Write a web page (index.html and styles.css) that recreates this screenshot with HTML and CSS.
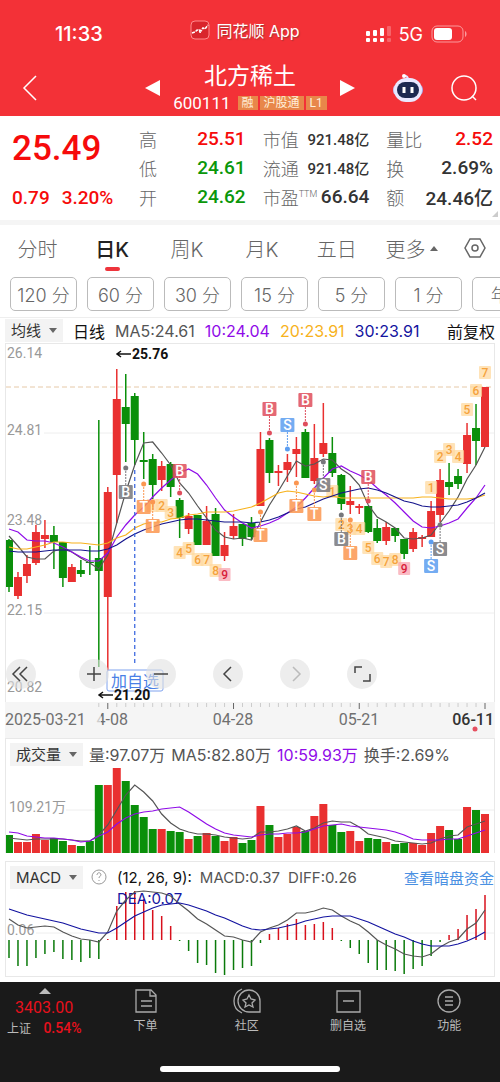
FILE: index.html
```
<!DOCTYPE html>
<html lang="zh-CN">
<head>
  <meta charset="UTF-8">
  <meta name="viewport" content="width=device-width, initial-scale=1.0">
  <title>北方稀土 600111</title>
  <link rel="stylesheet" href="styles.css">
</head>
<body>
  <header class="header">
    <div class="status-bar">
      <span class="clock">11:33</span>
      <span class="app-name">
        <svg width="20" height="20" viewBox="0 0 20 20" fill="none" stroke="#fff">
          <rect x="1" y="1" width="18" height="18" rx="4" fill="#d9252c" stroke="#ff8a8c"/>
          <path d="M2 13l3-1 2-2 3 1 3-3 2 1 3-4" stroke-width="1.5" stroke-dasharray="3 1"/>
          <path d="M9 9l1 4 2-3"/>
        </svg>
        同花顺 App
      </span>
      <span class="signals">
        <svg width="26" height="18" viewBox="0 0 26 18" fill="#fff">
          <rect x="1" y="6" width="4" height="5" rx="1"/>
          <rect x="8" y="5" width="4" height="6" rx="1"/>
          <rect x="15" y="3" width="4" height="8" rx="1"/>
          <rect x="22" y="1" width="4" height="10" rx="1" opacity=".25"/>
          <rect x="1" y="13" width="4" height="4" rx="1"/>
          <rect x="8" y="13" width="4" height="4" rx="1"/>
          <rect x="15" y="13" width="4" height="4" rx="1"/>
          <rect x="22" y="13" width="4" height="4" rx="1" opacity=".25"/>
        </svg>
        <span>5G</span>
        <svg width="36" height="18" viewBox="0 0 36 18">
          <rect x="1" y="1" width="31" height="16" rx="5" fill="none" stroke="#fa9a9d"/>
          <rect x="3" y="3" width="18" height="12" rx="3" fill="#fff"/>
          <path d="M34 6v6c2-1 2-5 0-6z" fill="#fa9a9d"/>
        </svg>
      </span>
    </div>
    <div class="title-bar">
      <button class="icon-btn" aria-label="返回">
        <svg width="16" height="28" viewBox="0 0 16 28" fill="none" stroke="#fff" stroke-width="1.5"><path d="M14 2L2 14l12 12"/></svg>
      </button>
      <div class="stock-switch">
        <button class="icon-btn" aria-label="上一只"><svg width="15" height="16" viewBox="0 0 15 16" fill="#fff"><path d="M15 0v16L0 8z"/></svg></button>
        <div class="stock">
          <h1>北方稀土</h1>
          <div class="stock-code">600111 <span class="tag">融</span><span class="tag">沪股通</span><span class="tag">L1</span></div>
        </div>
        <button class="icon-btn" aria-label="下一只"><svg width="15" height="16" viewBox="0 0 15 16" fill="#fff"><path d="M0 0v16l15-8z"/></svg></button>
      </div>
      <div class="title-actions">
        <button class="icon-btn" aria-label="智能助手">
          <svg width="32" height="30" viewBox="0 0 32 30">
            <path d="M16 7c0-3-1-4-3-4" fill="none" stroke="#e4e2ff" stroke-width="2"/>
            <circle cx="12" cy="3" r="2" fill="#fff"/>
            <ellipse cx="4" cy="17" rx="3" ry="5" fill="#c7c6f5"/>
            <ellipse cx="28" cy="17" rx="3" ry="5" fill="#a9a8ee"/>
            <rect x="2" y="5" width="28" height="24" rx="12" fill="#e9e8ff"/>
            <rect x="5" y="9" width="22" height="16" rx="8" fill="#1c2850"/>
            <path d="M12 14v6M20 14v6" stroke="#fff" stroke-width="3"/>
          </svg>
        </button>
        <button class="icon-btn" aria-label="搜索">
          <svg width="28" height="28" viewBox="0 0 28 28" fill="none" stroke="#fff" stroke-width="1.5"><circle cx="14" cy="14" r="12"/><path d="M22 22l4 4"/></svg>
        </button>
      </div>
    </div>
  </header>

  <section class="quote">
    <div class="price">
      <strong>25.49</strong>
      <div class="change"><span>0.79</span><span>3.20%</span></div>
    </div>
    <dl>
      <div><dt>高</dt><dd class="up">25.51</dd></div>
      <div><dt>低</dt><dd class="down">24.61</dd></div>
      <div><dt>开</dt><dd class="down">24.62</dd></div>
    </dl>
    <dl>
      <div><dt>市值</dt><dd class="small">921.48亿</dd></div>
      <div><dt>流通</dt><dd class="small">921.48亿</dd></div>
      <div><dt>市盈<sup>TTM</sup></dt><dd>66.64</dd></div>
    </dl>
    <dl>
      <div><dt>量比</dt><dd class="up">2.52</dd></div>
      <div><dt>换</dt><dd>2.69%</dd></div>
      <div><dt>额</dt><dd>24.46亿</dd></div>
    </dl>
    <span class="corner"></span>
  </section>

  <nav class="tabs">
    <button>分时</button>
    <button class="active">日K</button>
    <button>周K</button>
    <button>月K</button>
    <button>五日</button>
    <button>更多<span class="caret-up"></span></button>
    <button aria-label="设置">
      <svg width="22" height="20" viewBox="0 0 22 20" fill="none" stroke="#666" stroke-width="1.5"><path d="M6 1h10l5 9-5 9H6l-5-9z"/><circle cx="11" cy="10" r="3"/></svg>
    </button>
  </nav>
  <div class="periods">
    <button>120 分</button>
    <button>60 分</button>
    <button>30 分</button>
    <button>15 分</button>
    <button>5 分</button>
    <button>1 分</button>
    <button>年K</button>
  </div>

  <div class="ma-row">
    <span class="picker"><select aria-label="主图指标"><option>均线</option></select></span>
    <span class="black">日线</span>
    <span>MA5:24.61</span>
    <span class="purple">10:24.04</span>
    <span class="yellow">20:23.91</span>
    <span class="navy">30:23.91</span>
    <span class="black adjust">前复权</span>
  </div>

  <main>
    <section class="chart main-chart">
      <svg id="kline" viewBox="0 1 488 358"></svg>
      <div class="chart-tools">
        <button aria-label="收起"><svg viewBox="0 0 30 30"><path d="M14 8l-7 7 7 7M21 8l-7 7 7 7"/></svg></button>
        <button aria-label="放大"><svg viewBox="0 0 30 30"><path d="M15 8v14M8 15h14"/></svg></button>
        <button aria-label="缩小"><svg viewBox="0 0 30 30"><path d="M8 15h14"/></svg></button>
        <button aria-label="左移"><svg viewBox="0 0 30 30"><path d="M18 8l-7 7 7 7"/></svg></button>
        <button aria-label="右移" disabled><svg viewBox="0 0 30 30"><path d="M13 8l7 7-7 7"/></svg></button>
        <button aria-label="全屏"><svg viewBox="0 0 30 30"><path d="M8 14V8h7M16 22h7v-7"/></svg></button>
      </div>
    </section>
    <div class="axis"><svg id="axis" viewBox="0 0 490 36"></svg></div>

    <section class="chart">
      <div class="chart-head volume-head">
        <span class="picker"><select aria-label="副图指标一"><option>成交量</option></select></span>
        <span>量:97.07万</span>
        <span>MA5:82.80万</span>
        <span class="purple">10:59.93万</span>
        <span>换手:2.69%</span>
      </div>
      <svg id="volume" viewBox="0 0 488 86"></svg>
    </section>

    <section class="chart macd">
      <div class="chart-head">
        <span class="picker"><select aria-label="副图指标二"><option>MACD</option></select></span>
        <svg class="help" viewBox="0 0 16 16" fill="none" stroke="#999"><circle cx="8" cy="8" r="7"/><path d="M6 6c0-3 4-3 4 0 0 1-2 1-2 3M8 11v1"/></svg>
        <span class="black">(12, 26, 9):</span>
        <span>MACD:0.37</span>
        <span>DIFF:0.26</span>
        <a href="#">查看暗盘资金</a>
      </div>
      <svg id="macd" viewBox="0 0 488 86"></svg>
    </section>
  </main>

  <footer class="footer">
    <nav class="bottom-nav">
      <a class="index" href="#">
        <span class="caret-up"></span>
        <span class="points">3403.00</span>
        <span class="index-name">上证 <b>0.54%</b></span>
      </a>
      <a href="#">
        <svg width="24" height="26" viewBox="0 0 24 26"><path d="M2 2h15l5 5v17H2zM16 2v6h6M7 13h11M7 18h11"/></svg>
        下单
      </a>
      <a href="#">
        <svg width="28" height="26" viewBox="0 0 28 26"><path d="M16 2a11 11 0 1 0 0 22h11V13A11 11 0 0 0 16 2zM9 1a13 13 0 0 0 0 24"/><path d="M16 7l2 4 4 1-3 3 1 4-4-2-4 2 1-4-3-3 4-1z"/></svg>
        社区
      </a>
      <a href="#">
        <svg width="26" height="26" viewBox="0 0 26 26"><path d="M2 3h23v21H2zM8 13h11"/></svg>
        删自选
      </a>
      <a href="#">
        <svg width="26" height="26" viewBox="0 0 26 26"><circle cx="13" cy="13" r="11"/><path d="M9 9h8M9 13h8M9 17h8"/></svg>
        功能
      </a>
    </nav>
    <div class="home-bar"></div>
  </footer>

  <script src="charts.js"></script>
</body>
</html>
```

FILE: styles.css
```
* {
  box-sizing: border-box;
}
body {
  margin: 0;
  background: #fff;
  color: #333;
  font-family: Inter, "Noto Sans CJK SC", sans-serif;
  font-size: 15px;
}
button {
  border: none;
  background: none;
  padding: 0;
  color: inherit;
  font: inherit;
  cursor: pointer;
}
a {
  color: inherit;
  text-decoration: none;
}
svg {
  display: block;
}

/* header */
.header {
  height: 116px;
  background: #f33137;
  color: #fff;
}
.status-bar {
  display: grid;
  grid-template-columns: 1fr auto 1fr;
  align-items: center;
  height: 60px;
  padding: 8px 33px 0 23px;
}
.clock {
  margin-left: 32px;
  font-size: 20px;
  font-weight: 500;
}
.app-name {
  display: flex;
  align-items: center;
  gap: 6px;
  margin: 0 0 8px;
  font-size: 16px;
  text-shadow: 1px 1px 1px #a33;
}
.signals {
  display: flex;
  align-items: center;
  justify-content: flex-end;
  gap: 8px;
  font-size: 18px;
}
.title-bar {
  display: grid;
  grid-template-columns: 1fr auto 1fr;
  align-items: center;
  height: 56px;
  padding: 0 22px;
}
.icon-btn {
  display: block;
}
.stock-switch {
  display: flex;
  align-items: center;
  justify-content: space-between;
  width: 210px;
}
.stock {
  text-align: center;
}
.stock h1 {
  margin: 0;
  font-size: 23px;
  font-weight: 400;
  line-height: 30px;
}
.stock-code {
  display: flex;
  align-items: center;
  gap: 2px;
  font-family: Roboto, "Noto Sans CJK SC", sans-serif;
  font-size: 17px;
  line-height: 24px;
}
.tag {
  padding: 0 4px;
  background: #e8874a;
  color: #ffeed8;
  font-size: 12px;
  line-height: 14px;
}
.tag:first-child {
  margin-left: 5px;
}
.title-actions {
  display: flex;
  align-items: center;
  justify-content: flex-end;
  gap: 26px;
}

/* quote */
.quote {
  position: relative;
  display: grid;
  grid-template-columns: 110px 1fr 1fr 1fr;
  gap: 17px;
  padding: 8px 7px 8px 12px;
  border-bottom: 5px solid #f5f5f5;
  font-family: Roboto, "Noto Sans CJK SC", sans-serif;
}
.corner {
  position: absolute;
  right: 2px;
  bottom: 3px;
  border: 3px solid #ccc;
  border-top-color: transparent;
  border-left-color: transparent;
}
.price {
  color: #f60b0b;
}
.price strong {
  display: block;
  height: 59px;
  font-size: 35px;
  font-weight: 500;
  line-height: 50px;
}
.change {
  display: flex;
  gap: 12px;
  font-size: 19px;
  font-weight: 500;
  line-height: 29px;
}
.quote dl {
  margin: 0;
}
.quote dl div {
  display: flex;
  justify-content: space-between;
  align-items: center;
  height: 29px;
  white-space: nowrap;
}
.quote dt {
  color: #666;
  font-size: 18px;
  font-weight: 300;
}
.quote dd {
  margin: 0;
  font-size: 19px;
  font-weight: 500;
}
.quote dd.small {
  font-size: 15px;
}
.quote sup {
  font-size: 9px;
  line-height: 0;
  vertical-align: 8px;
}
.quote dd.up,
.up {
  color: #f60b0b;
}
.down {
  color: #0a970a;
}

/* period tabs */
.tabs {
  display: grid;
  grid-template-columns: repeat(6, 1fr) 51px;
  height: 52px;
  color: #666;
  font-size: 20px;
  font-weight: 300;
}
.tabs button {
  display: flex;
  align-items: center;
  justify-content: center;
  padding-bottom: 6px;
}
.tabs .active {
  position: relative;
  color: #222;
  font-weight: 500;
}
.tabs .active::after {
  content: "";
  position: absolute;
  bottom: 6px;
  width: 15px;
  height: 4px;
  border-radius: 2px;
  background: #ee343c;
}
.caret-up {
  margin-left: 4px;
  border: 4px solid transparent;
  border-top: none;
  border-bottom: 5px solid #666;
}
.periods {
  display: flex;
  gap: 10px;
  padding: 0 0 6px 10px;
  overflow: hidden;
  border-bottom: 1px solid #eee;
}
.periods button {
  flex: 0 0 67px;
  height: 34px;
  border: 1px solid #bbb;
  border-radius: 5px;
  color: #666;
  font-size: 18px;
  font-weight: 300;
}

/* indicator rows */
.ma-row,
.chart-head {
  display: flex;
  align-items: center;
  gap: 8px;
  color: #555;
  white-space: nowrap;
}
.ma-row {
  gap: 10px;
  height: 25px;
  padding: 0 5px;
  font-size: 16px;
}
.adjust {
  margin-left: auto;
}
.picker {
  position: relative;
  background: #f3f3f3;
  font-size: 15px;
}
.picker::after {
  content: "";
  position: absolute;
  top: 9px;
  right: 6px;
  border: 4px solid transparent;
  border-top: 5px solid #666;
  border-bottom: none;
  pointer-events: none;
}
.picker select {
  appearance: none;
  display: block;
  height: 23px;
  padding: 0 21px 0 6px;
  border: none;
  background: none;
  color: #333;
  font: inherit;
}
.black {
  color: #111;
}
.purple {
  color: #8f0be8;
}
.yellow {
  color: #f7b21c;
}
.navy {
  color: #1414a0;
}

/* charts */
.chart {
  margin: 0 5px;
  border: 1px solid #e8e8e8;
  border-bottom: none;
}
.chart > svg,
.axis svg {
  width: 100%;
  height: auto;
}
.chart svg text,
.axis text {
  font-family: Roboto, "Noto Sans CJK SC", sans-serif;
}
.main-chart {
  position: relative;
}
.chart-head {
  height: 28px;
  padding: 2px 0 0 4px;
}
.volume-head {
  gap: 6px;
  font-size: 16px;
}
.chart-head a {
  margin-left: auto;
  color: #4a90e2;
}
.help {
  flex: none;
  width: 16px;
  margin: 0 2px 0 0;
}
.axis {
  margin: 0 5px;
  background: #f5f5f5;
}
.macd {
  margin: 8px 5px 5px;
  border-bottom: 1px solid #e8e8e8;
}
.chart-tools {
  position: absolute;
  bottom: 13px;
  left: 0;
  display: flex;
  gap: 37px;
}
.chart-tools button {
  width: 30px;
  height: 30px;
  border-radius: 50%;
  background: rgba(225, 225, 225, 0.6);
}
.chart-tools button:first-child {
  margin-right: 6px;
}
.chart-tools path {
  fill: none;
  stroke: #444;
  stroke-width: 1.5;
}
.chart-tools button:disabled path {
  stroke: #bbb;
}
.label {
  fill: #999;
  font-size: 14px;
}
.date {
  fill: #707070;
  font-size: 16px;
}
.grid {
  stroke: #eee;
}
.peak {
  fill: #111;
  font-size: 14px;
  font-weight: 700;
}
.line {
  fill: none;
  stroke-width: 1.2;
}
.mark {
  font-size: 14px;
  font-weight: 500;
  text-anchor: middle;
}
.count {
  font-size: 12px;
}

/* footer */
.footer {
  height: 100px;
  background: #1a1a1a;
  color: #bbb;
}
.bottom-nav {
  display: grid;
  grid-template-columns: 95px repeat(4, 1fr);
  height: 84px;
  padding-top: 6px;
}
.bottom-nav a {
  display: flex;
  flex-direction: column;
  align-items: center;
  font-size: 12px;
  line-height: 24px;
}
.bottom-nav svg {
  fill: none;
  stroke: #aaa;
  stroke-width: 1.3;
}
.bottom-nav .index {
  align-items: flex-start;
  padding-left: 7px;
  line-height: 20px;
}
.index .caret-up {
  margin-left: 32px;
  border-width: 0 6px 6px;
  border-bottom-color: #bbb;
}
.index .points {
  margin: 4px 0 0 8px;
  color: #e8101c;
  font-family: Roboto, sans-serif;
  font-size: 16px;
}
.index-name b {
  margin-left: 9px;
  color: #e8101c;
  font-family: Roboto, sans-serif;
  font-size: 14px;
  font-weight: 500;
}
.home-bar {
  width: 36%;
  height: 6px;
  margin: 0 auto;
  border-radius: 3px;
  background: #fff;
}
```

FILE: charts.js
```
const RED = '#e93030';
const GREEN = '#0a8f0a';
const STEP = 476 / 53;

// direction, high, body top, body bottom, low
const candles = [
  ['g', 196, 197, 244, 249], ['r', 229, 234, 253, 256], ['r', 212, 221, 233, 240], ['r', 182, 189, 220, 222],
  ['r', 177, 192, 196, 205], ['g', 183, 192, 199, 226], ['g', 199, 199, 235, 244], ['r', 221, 224, 239, 239],
  ['g', 217, 227, 231, 234], ['g', 203, 219, 220, 232], ['g', 77, 215, 228, 324], ['r', 144, 149, 254, 330],
  ['r', 26, 56, 132, 180], ['g', 31, 64, 81, 119], ['g', 50, 53, 97, 122], ['g', 89, 117, 119, 136],
  ['g', 111, 116, 142, 156], ['r', 118, 123, 137, 148], ['g', 119, 121, 144, 154], ['g', 155, 157, 175, 195],
  ['r', 170, 173, 186, 191], ['g', 172, 172, 202, 202], ['r', 163, 178, 202, 202], ['g', 165, 171, 213, 213],
  ['r', 189, 202, 213, 218], ['r', 171, 183, 193, 196], ['g', 181, 181, 196, 203], ['g', 174, 180, 194, 197],
  ['r', 89, 106, 163, 163], ['g', 95, 97, 130, 140], ['r', 122, 128, 130, 143], ['r', 111, 119, 127, 139],
  ['r', 94, 106, 111, 134], ['g', 86, 89, 135, 135], ['r', 81, 115, 138, 141], ['r', 60, 100, 111, 114],
  ['g', 94, 110, 130, 134], ['g', 131, 132, 161, 167], ['r', 143, 158, 162, 171], ['r', 161, 163, 165, 171],
  ['g', 163, 163, 189, 190], ['g', 176, 185, 198, 200], ['r', 179, 184, 198, 202], ['g', 185, 185, 193, 199],
  ['g', 196, 196, 211, 216], ['r', 185, 189, 206, 209], ['r', 192, 194, 196, 204], ['r', 158, 168, 194, 194],
  ['r', 126, 137, 172, 179], ['g', 120, 139, 144, 152], ['g', 126, 133, 141, 146], ['r', 80, 92, 121, 130],
  ['g', 61, 85, 98, 122], ['r', 44, 44, 104, 104]
];

const ma5 = [193, 203, 214, 216, 216, 208, 206, 209, 215, 220, 226, 212, 180, 149, 122, 100, 99, 110, 122, 140, 150, 163, 175, 187, 194, 196, 195, 197, 179, 162, 148, 133, 118, 123, 121, 116, 117, 126, 132, 142, 162, 174, 179, 185, 195, 196, 195, 192, 180, 168, 154, 136, 122, 104];
const ma10 = [186, 189, 197, 198, 198, 200, 204, 209, 214, 218, 218, 210, 194, 182, 172, 164, 154, 145, 137, 130, 126, 131, 142, 155, 167, 174, 180, 185, 183, 180, 176, 170, 164, 155, 145, 135, 126, 123, 128, 132, 137, 145, 152, 160, 169, 178, 184, 185, 183, 180, 176, 165, 155, 142];
const ma20 = [204, 206, 206, 204, 202, 199, 199, 200, 200, 201, 202, 200, 195, 192, 185, 181, 179, 179, 176, 175, 172, 171, 169, 169, 169, 168, 166, 164, 160, 155, 150, 148, 149, 151, 153, 154, 153, 155, 155, 155, 155, 155, 155, 155, 155, 155, 154, 154, 155, 156, 156, 156, 155, 152];
const ma30 = [208, 209, 209, 209, 208, 207, 207, 207, 207, 208, 208, 206, 202, 196, 191, 187, 184, 181, 179, 177, 176, 176, 177, 178, 179, 179, 179, 180, 179, 177, 174, 170, 166, 164, 160, 156, 153, 150, 148, 146, 145, 147, 150, 154, 158, 160, 163, 164, 164, 163, 162, 159, 155, 150];

// index, letter, color, badge y, dot y
const signals = [
  [13, 'B', 'gray', 149, 125], [15, 'T', 'orange', 164, 141], [16, 'T', 'orange', 183, 159], [19, 'B', 'red', 128, 150],
  [28, 'T', 'orange', 192, 169], [29, 'B', 'red', 66, 90], [31, 'S', 'blue', 82, 106], [32, 'T', 'orange', 163, 140],
  [33, 'B', 'red', 57, 81], [34, 'T', 'orange', 171, 147], [35, 'S', 'gray', 142, 119], [37, 'B', 'gray', 196, 172],
  [38, 'T', 'orange', 210, 177], [40, 'B', 'red', 134, 158], [47, 'S', 'blue', 223, 199], [48, 'S', 'gray', 206, 182]
];
const signalColors = { gray: '#77777b', orange: '#fb9650', red: '#df4d5c', blue: '#5c9df0' };

// index, count, y
const counts = [
  [16, 1, 162], [17, 2, 162], [18, 3, 169], [19, 4, 209], [20, 5, 205], [21, 6, 216], [22, 7, 216], [23, 8, 227], [24, 9, 231],
  [36, 1, 148], [37, 2, 181], [38, 3, 185], [39, 4, 185], [40, 5, 204], [41, 6, 215], [42, 7, 218], [43, 8, 216], [44, 9, 225],
  [47, 1, 144], [48, 2, 113], [49, 3, 106], [50, 4, 113], [51, 5, 66], [52, 6, 47], [53, 7, 29]
];

const volumes = [18, 11, 11, 19, 13, 15, 12, 8, 7, 12, 68, 68, 85, 72, 48, 36, 24, 24, 22, 21, 14, 17, 20, 17, 12, 16, 10, 13, 47, 28, 16, 19, 26, 22, 37, 49, 28, 21, 22, 12, 15, 14, 11, 9, 10, 10, 8, 20, 27, 23, 14, 46, 43, 39];
const vol5 = [15, 14, 13, 14, 14, 14, 14, 13, 12, 12, 18, 28, 43, 58, 68, 61, 52, 39, 30, 24, 21, 19, 19, 18, 16, 15, 14, 15, 21, 21, 22, 24, 27, 22, 25, 30, 32, 31, 31, 26, 19, 17, 15, 12, 11, 10, 9, 10, 14, 17, 18, 26, 29, 32];
const vol10 = [21, 20, 17, 16, 15, 15, 14, 13, 11, 12, 17, 21, 29, 35, 39, 41, 42, 44, 45, 46, 41, 35, 29, 24, 20, 18, 17, 16, 18, 19, 19, 20, 20, 21, 24, 27, 28, 29, 27, 26, 25, 24, 23, 21, 18, 14, 13, 13, 13, 14, 14, 17, 20, 23];

const macd = [-18, -26, -26, -18, -14, -12, -19, -20, -22, -18, -19, 1, 34, 48, 49, 41, 30, 24, 14, -1, -11, -23, -25, -33, -35, -30, -28, -26, -3, 6, 12, 16, 21, 15, 16, 18, 12, -1, -8, -14, -23, -30, -30, -31, -34, -29, -26, -16, -2, 5, 11, 25, 31, 45];
const diff = [21, 15, 12, 13, 14, 13, 8, 4, 1, 0, -2, 8, 29, 40, 48, 49, 48, 47, 44, 36, 29, 21, 16, 10, 4, 3, 0, -2, 8, 12, 15, 20, 27, 27, 29, 32, 30, 24, 19, 15, 8, 0, -5, -9, -14, -16, -17, -14, -7, -2, 1, 11, 17, 30];
const dea = [31, 28, 25, 23, 21, 19, 17, 14, 11, 9, 7, 7, 12, 18, 24, 28, 32, 35, 36, 37, 35, 32, 29, 25, 22, 18, 14, 11, 10, 11, 12, 14, 16, 19, 21, 23, 24, 24, 24, 21, 18, 14, 10, 6, 3, -1, -4, -6, -6, -6, -4, -1, 3, 8];

function x(i) {
  return 3 + i * STEP;
}

function line(values, color, toY = v => v) {
  const points = values.map((v, i) => `${x(i)},${toY(v)}`).join(' ');
  return `<polyline class="line" points="${points}" stroke="${color}"/>`;
}

function grid(y, from = 0) {
  return `<path class="grid" d="M${from} ${y}H488"/>`;
}

function drawKline() {
  let out = grid(90, 38) + grid(180, 38) + grid(270, 38);
  out += '<path d="M0 44H488" stroke="#e6c9a8" stroke-dasharray="5 3"/>';
  [['26.14', 15], ['24.81', 92], ['23.48', 182], ['22.15', 272], ['20.82', 349]].forEach(([t, y]) => {
    out += `<text class="label" x="1" y="${y}">${t}</text>`;
  });

  candles.forEach(([dir, high, top, bottom, low], i) => {
    const color = dir === 'r' ? RED : GREEN;
    out += `<path d="M${x(i)} ${high}V${low}" stroke="${color}" stroke-width="1.5"/>`;
    out += `<rect x="${x(i) - 4}" y="${top}" width="8" height="${bottom - top}" fill="${color}"/>`;
  });

  counts.forEach(([i, n, y]) => {
    const nine = n === 9;
    out += `<rect x="${x(i) - 6}" y="${y - 6}" width="12" height="13" rx="1" fill="${nine ? '#f8a5b0' : '#ffd9a0'}" opacity=".75"/>`;
    out += `<text class="mark count" x="${x(i)}" y="${y + 5}" fill="${nine ? '#d8203a' : '#f5a23c'}">${n}</text>`;
  });

  out += line(ma5, '#555') + line(ma10, '#8f0be8') + line(ma20, '#f7b21c') + line(ma30, '#14148c');

  signals.forEach(([i, letter, name, y, dot]) => {
    const color = signalColors[name];
    out += `<path d="M${x(i)} ${dot}V${y}" stroke="${color}" stroke-dasharray="2 1"/>`;
    out += `<circle cx="${x(i)}" cy="${dot}" r="2.5" fill="${color}"/>`;
    out += `<rect x="${x(i) - 7}" y="${y - 7}" width="14" height="14" rx="1" fill="${color}" opacity=".85"/>`;
    out += `<text class="mark" x="${x(i)}" y="${y + 5}" fill="#fff">${letter}</text>`;
  });

  out += `<path d="M${x(14)} 127V322" stroke="#3f6be0" stroke-width="1.3" stroke-dasharray="4 3"/>`;
  out += '<rect x="101" y="327" width="56" height="21" rx="2" fill="#fff" stroke="#7ea2ee"/>';
  out += '<text x="105" y="344" font-size="16" fill="#4a7fe6">加自选</text>';
  out += '<path d="M125 11h-14m4-3l-4 3 4 3M107 352H93m4-3l-4 3 4 3" fill="none" stroke="#111" stroke-width="1.5"/>';
  out += '<text class="peak" x="126" y="16">25.76</text><text class="peak" x="108" y="357">21.20</text>';
  document.getElementById('kline').innerHTML = out;
}

function drawAxis() {
  let out = '';
  for (let i = 10; i <= 53; i++) {
    const major = (i - 11) % 14 === 0;
    out += `<path d="M${x(i) + 1} 1v${major ? 6 : 4}" stroke="${major ? '#666' : '#ccc'}"/>`;
  }
  out += '<text class="date" x="123" y="23" text-anchor="end">4-08</text>';
  out += '<rect x="84" y="8" width="12" height="18" fill="#f5f5f5" opacity=".7"/>';
  out += '<text class="date" x="0" y="23">2025-03-21</text>';
  out += '<text class="date" x="228" y="23" text-anchor="middle">04-28</text>';
  out += '<text class="date" x="354" y="23" text-anchor="middle">05-21</text>';
  out += '<text class="date" x="489" y="23" text-anchor="end" style="fill:#333;font-weight:500">06-11</text>';
  out += '<circle cx="470" cy="27" r="2.5" fill="#e65060"/>';
  document.getElementById('axis').innerHTML = out;
}

function drawVolume() {
  let out = grid(43, 60) + '<text class="label" x="3" y="45">109.21万</text>';
  volumes.forEach((v, i) => {
    out += `<rect x="${x(i) - 4}" y="${86 - v}" width="8" height="${v}" fill="${candles[i][0] === 'r' ? RED : GREEN}"/>`;
  });
  out += line(vol5, '#555', v => 86 - v) + line(vol10, '#8f0be8', v => 86 - v);
  document.getElementById('volume').innerHTML = out;
}

function drawMacd() {
  let out = grid(43, 30) + '<text class="label" x="1" y="45">0.06</text>';
  macd.forEach((v, i) => {
    out += `<path d="M${x(i)} 50V${50 - v}" stroke="${v > 0 ? '#d8101c' : '#0a7a0a'}" stroke-width="1.5"/>`;
  });
  out += '<text x="111" y="14" font-size="15" fill="#1414a0" style="font-family:Inter">DEA:0.07</text>';
  out += line(diff, '#555', v => 50 - v) + line(dea, '#1414a0', v => 50 - v);
  document.getElementById('macd').innerHTML = out;
}

drawKline();
drawAxis();
drawVolume();
drawMacd();
```
